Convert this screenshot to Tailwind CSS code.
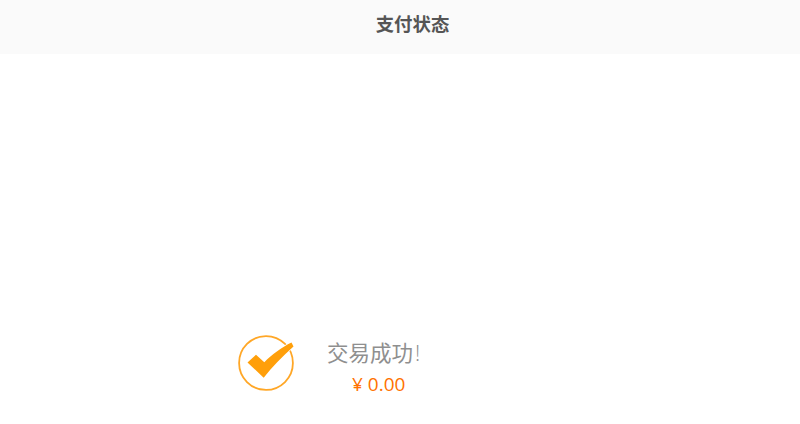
<!DOCTYPE html>
<html lang="zh">
<head>
<meta charset="utf-8">
<script src="https://cdn.jsdelivr.net/npm/@tailwindcss/browser@4"></script>
<title>支付状态</title>
</head>
<body class="bg-white overflow-hidden font-['Open_Sans','Noto_Sans_CJK_SC',sans-serif]">
<div class="flex flex-col h-[424px]">
  <header class="h-[54px] bg-[#fafafa] flex items-start justify-center pt-[11px] pl-[25px]">
    <h1 class="text-[18.4px] leading-[26px] font-bold text-[#555]">支付状态</h1>
  </header>
  <main class="flex items-start pt-[281px] pl-[238px]">
    <svg class="w-[56px] h-[56px] shrink-0" viewBox="0 0 56 56" fill="none">
      <circle cx="28" cy="28" r="26.9" stroke="#ffa727" stroke-width="1.8"/>
      <path d="M9.5 27.5 L18 19.7 L26.3 27.2 C34 19.5 44 12 53.5 7.5 L55.5 11.5 C44 22 34 32 25.7 42.7 Z" fill="#ff9f0a" stroke="#fff" stroke-width="1.5" paint-order="stroke"/>
    </svg>
    <div class="ml-[33px] flex flex-col items-start">
      <p class="text-[21.5px] leading-[30px] text-[#8f8f8f] mt-[3px] whitespace-nowrap">交易成功<span class="ml-[2px] font-light">!</span></p>
      <p class="text-[19px] leading-[26px] text-[#ff7200] ml-[25px] mt-[3px]">¥ 0.00</p>
    </div>
  </main>
</div>
</body>
</html>
